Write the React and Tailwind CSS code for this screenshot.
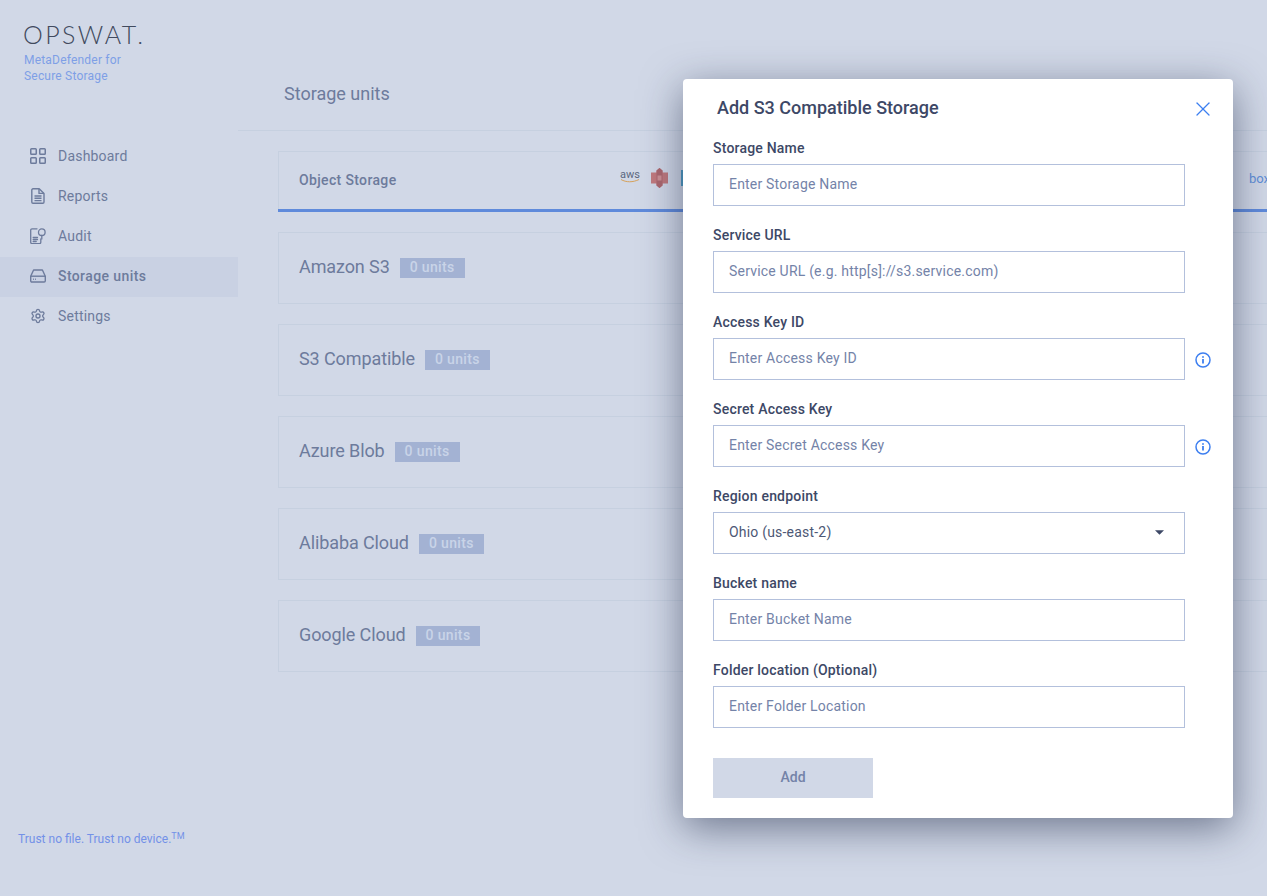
import { X } from 'lucide-react';

function DashboardIcon() {
    return (
        <svg width="16" height="16" viewBox="0 0 16 16" fill="none" stroke="currentColor" strokeWidth="1.5">
            <rect x="0.75" y="0.75" width="5.5" height="5.5" rx="0.8" />
            <rect x="9.75" y="0.75" width="5.5" height="5.5" rx="0.8" />
            <rect x="0.75" y="9.75" width="5.5" height="5.5" rx="0.8" />
            <rect x="9.75" y="9.75" width="5.5" height="5.5" rx="0.8" />
        </svg>
    );
}

function ReportsIcon() {
    return (
        <svg width="14" height="16" viewBox="0 0 14 16" fill="none" stroke="currentColor" strokeWidth="1.4" strokeLinejoin="round">
            <path d="M2 .8h6.2L13 5.4V14a1.2 1.2 0 0 1-1.2 1.2H2A1.2 1.2 0 0 1 .8 14V2A1.2 1.2 0 0 1 2 .8Z" />
            <path d="M8 1v4.4h5M3.5 8h7M3.5 10.3h7M3.5 12.6h7" />
        </svg>
    );
}

function AuditIcon() {
    return (
        <svg width="16" height="16" viewBox="0 0 16 16" fill="none" stroke="currentColor" strokeWidth="1.3" strokeLinecap="round">
            <path d="M7 .8H2A1.3 1.3 0 0 0 .7 2.1v12.2A1.3 1.3 0 0 0 2 15.6h7.5a1.3 1.3 0 0 0 1.3-1.3V11" />
            <circle cx="11.8" cy="4.2" r="3.3" />
            <path d="M11.8 7.5V11M3.2 9.5h4.3M3.2 11.5h4.3M3.2 13.5h3" />
        </svg>
    );
}

function StorageIcon() {
    return (
        <svg width="16" height="14" viewBox="0 0 16 14" fill="none" stroke="currentColor" strokeWidth="1.4" strokeLinejoin="round">
            <path d="M3.6 1h8.8l2.9 6.2v4.6a1.2 1.2 0 0 1-1.2 1.2H1.9a1.2 1.2 0 0 1-1.2-1.2V7.2L3.6 1Z" />
            <path d="M.8 7.2h14.4" />
            <path d="M3 10.2h.8M5.2 10.2H6" />
        </svg>
    );
}

function SettingsIcon() {
    return (
        <svg width="16" height="16" viewBox="0 0 24 24" fill="none" stroke="currentColor" strokeWidth="2" strokeLinecap="round" strokeLinejoin="round">
            <path d="M9.671 4.136a2.34 2.34 0 0 1 4.659 0 2.34 2.34 0 0 0 3.319 1.915 2.34 2.34 0 0 1 2.33 4.033 2.34 2.34 0 0 0 0 3.831 2.34 2.34 0 0 1-2.33 4.033 2.34 2.34 0 0 0-3.319 1.915 2.34 2.34 0 0 1-4.659 0 2.34 2.34 0 0 0-3.32-1.915 2.34 2.34 0 0 1-2.33-4.033 2.34 2.34 0 0 0 0-3.831A2.34 2.34 0 0 1 6.35 6.051a2.34 2.34 0 0 0 3.319-1.915" />
            <circle cx="12" cy="12" r="3" />
        </svg>
    );
}

function InfoIcon() {
    return (
        <svg width="16" height="16" viewBox="0 0 16 16" fill="none" stroke="#3d7ff0" strokeWidth="1.5">
            <circle cx="8" cy="8" r="7" />
            <path d="M8 7v4.5" strokeWidth="1.8" />
            <path d="M8 4.2v1.6" strokeWidth="1.8" />
        </svg>
    );
}

const navItems = [
    { label: 'Dashboard', icon: <DashboardIcon /> },
    { label: 'Reports', icon: <ReportsIcon /> },
    { label: 'Audit', icon: <AuditIcon /> },
    { label: 'Storage units', icon: <StorageIcon />, active: true },
    { label: 'Settings', icon: <SettingsIcon /> },
];

const storages = [
    { name: 'Amazon S3', units: '0 units' },
    { name: 'S3 Compatible', units: '0 units' },
    { name: 'Azure Blob', units: '0 units' },
    { name: 'Alibaba Cloud', units: '0 units' },
    { name: 'Google Cloud', units: '0 units' },
];

const fields = [
    { label: 'Storage Name', placeholder: 'Enter Storage Name' },
    { label: 'Service URL', placeholder: 'Service URL (e.g. http[s]://s3.service.com)' },
    { label: 'Access Key ID', placeholder: 'Enter Access Key ID', info: true },
    { label: 'Secret Access Key', placeholder: 'Enter Secret Access Key', info: true },
    { label: 'Region endpoint', value: 'Ohio (us-east-2)', select: true },
    { label: 'Bucket name', placeholder: 'Enter Bucket Name' },
    { label: 'Folder location (Optional)', placeholder: 'Enter Folder Location' },
];

function Field({ field }) {
    return (
        <div className="h-[87px]">
            <div className="h-[21px] text-[14px] leading-[21px] tracking-[0.2px] font-medium text-[#3d4866]">{field.label}</div>
            <div className="flex items-center mt-[5px]">
                <div className="w-[472px] h-[42px] shrink-0 border border-[#b3c0dc] flex items-center justify-between pl-[15px] pr-[20px] pb-[2px] text-[14px] tracking-[0.2px]">
                    {field.select ? (
                        <>
                            <span className="text-[#4d5875]">{field.value}</span>
                            <svg width="9" height="5" viewBox="0 0 10 5" fill="#3d4866"><path d="M0 0h10L5 5Z" /></svg>
                        </>
                    ) : (
                        <span className="text-[#7483a8]">{field.placeholder}</span>
                    )}
                </div>
                {field.info && <div className="ml-[10px] mt-[2px]"><InfoIcon /></div>}
            </div>
        </div>
    );
}

export default function App() {
    return (
        <div className="relative w-[1267px] h-[896px] overflow-hidden flex bg-[#d1d8e7] font-['Roboto',sans-serif] text-[#6d7b9c]">
            {/* Sidebar */}
            <aside className="w-[238px] shrink-0 flex flex-col">
                <div className="pl-[23px] pt-[21px] h-[137px]">
                    <div className="h-[26px] font-['Lato',sans-serif] text-[25px] leading-[26px] font-light tracking-[2.4px] text-[#414a5e] whitespace-nowrap">OPSWAT<span className="text-[14px] tracking-normal font-bold">.</span></div>
                    <div className="mt-[5px] pl-[1px] text-[12px] leading-[16px] tracking-[0.2px] text-[#7e9fe6]">MetaDefender for<br />Secure Storage</div>
                </div>
                <nav>
                    {navItems.map(item => (
                        <div key={item.label} className={`h-[40px] flex items-center pl-[30px] pb-[2px] text-[14px] ${item.active ? 'bg-[#c9d1e3] font-medium tracking-[0.4px]' : 'tracking-[0.2px]'}`}>
                            <span className="w-[16px] flex justify-center">{item.icon}</span>
                            <span className="ml-[12px]">{item.label}</span>
                        </div>
                    ))}
                </nav>
                <div className="mt-auto mb-[49px] pl-[18px] text-[12px] leading-[16px] text-[#7391e8] whitespace-nowrap">
                    Trust no file. Trust no device.<span className="text-[9px] align-[4px] leading-none">TM</span>
                </div>
            </aside>

            {/* Main */}
            <main className="flex-1 min-w-0">
                <div className="h-[131px] border-b border-[#c6d0e0] pl-[46px] pt-[83px] text-[18px] leading-[22px]">Storage units</div>
                <div className="pl-[40px] pt-[20px]">
                    <div className="h-[58px] border border-[#c6d0e0] border-b-0 border-r-0 flex items-center pl-[20px] relative text-[14px] font-medium tracking-[0.35px]">
                        <span>Object Storage</span>
                        <div className="absolute left-[341px] top-[18px] w-[20px] text-center text-[#5d6880] text-[11px] font-normal tracking-normal leading-[10px]">
                            aws
                            <svg className="block -mt-px" width="20" height="4" viewBox="0 0 20 4" fill="none" stroke="#d6a25c" strokeWidth="1"><path d="M1 .5c5 3 12 3 18 0" /></svg>
                        </div>
                        <svg className="absolute left-[372px] top-[16px]" width="17" height="20" viewBox="0 0 17 20">
                            <path fill="#c0797d" d="M0 4.5h5.5V2.5L8.5 0l3 2.5v2H17v11h-5.5v2l-3 2.5-3-2.5v-2H0Z" />
                            <path fill="#ab676e" d="M5.5 2.5v15l3 2.5 3-2.5v-15L8.5 0Z" />
                            <path fill="#cd9094" d="M6.5 7.5h4v5h-4Z" />
                        </svg>
                        <div className="absolute left-[402px] top-[18px] w-[4px] h-[16px] bg-[#4f9dc6]" />
                        <span className="absolute left-[970px] top-[17px] text-[#5f8fd8] text-[13px] font-normal tracking-normal">box</span>
                    </div>
                    <div className="h-[3px] bg-[#5f8adb]" />
                    <div className="mt-[20px] flex flex-col gap-[20px]">
                        {storages.map(storage => (
                            <div key={storage.name} className="h-[72px] border border-r-0 border-[#c6d0e0] flex items-center pl-[20px]">
                                <span className="text-[18px] tracking-[-0.1px] pb-[4px]">{storage.name}</span>
                                <span className="ml-[10px] h-[20px] px-[10px] pb-[2px] flex items-center bg-[#a3b2d3] text-[#c9d4e8] text-[14px] font-medium tracking-[0.35px]">{storage.units}</span>
                            </div>
                        ))}
                    </div>
                </div>
            </main>

            {/* Add storage modal */}
            <div className="absolute left-[683px] top-[79px] w-[550px] h-[739px] bg-white rounded-[4px] shadow-[0_10px_40px_rgba(30,40,70,0.55)] pl-[30px]">
                <div className="h-[59px] pl-[4px] pt-[17px] text-[18px] leading-[24px] font-medium text-[#3d4866]">Add S3 Compatible Storage</div>
                <button type="button" className="absolute left-[508px] top-[18px] text-[#3d7ff0]">
                    <X size={24} strokeWidth={1.3} />
                </button>
                <div>
                    {fields.map(field => <Field key={field.label} field={field} />)}
                </div>
                <button type="button" className="mt-[11px] block w-[160px] h-[40px] pb-[2px] bg-[#d1d8e7] text-[#7483a8] text-[14px] font-medium">Add</button>
            </div>
        </div>
    );
}
